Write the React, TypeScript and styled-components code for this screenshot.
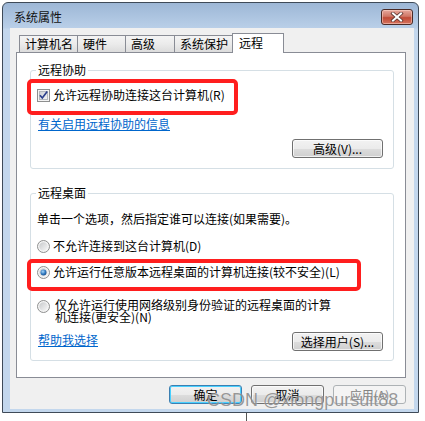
import React from 'react';
import styled, { createGlobalStyle, css } from 'styled-components';

const Global = createGlobalStyle`
  html, body { margin: 0; padding: 0; background: #ffffff; }
  body {
    width: 425px; height: 421px; overflow: hidden;
    font-family: "Noto Sans CJK SC", "Microsoft YaHei", sans-serif;
    font-size: 12px; color: #000;
  }
  * { box-sizing: border-box; }
`;

const Screen = styled.div`
  position: relative;
  width: 425px;
  height: 421px;
  padding: 2px 0 0 2px;
`;

const Window = styled.div`
  width: 417px;
  height: 411px;
  border: 1px solid #3e4a58;
  border-radius: 6px 6px 0 0;
  background: linear-gradient(to bottom, #9db7d6 0px, #b9cfe8 25px, #c3d7ed 26px, #c3d7ed 100%);
  display: flex;
  flex-direction: column;
  padding: 0 4px 3px 7px;
`;

const TitleBar = styled.div`
  height: 25px;
  flex: none;
  display: flex;
  justify-content: space-between;
  align-items: flex-start;
`;

const Title = styled.div`
  margin: 6px 0 0 4px;
  line-height: 16px;
  color: #111;
`;

const CloseButton = styled.div`
  margin: 6px 1px 0 0;
  width: 32px;
  height: 16px;
  border: 1px solid #4a2a26;
  border-radius: 3px;
  background: linear-gradient(to bottom, #e6a89d 0%, #d07766 45%, #c04a36 55%, #d5735f 100%);
  box-shadow: inset 0 0 0 1px rgba(255, 220, 210, 0.5);
  display: flex;
  align-items: center;
  justify-content: center;
`;

const Client = styled.div`
  flex: 1;
  background: #f0f0f0;
  display: flex;
  flex-direction: column;
  padding: 5px 8px 0 6px;
`;

const TabStrip = styled.div`
  display: flex;
  align-items: flex-end;
  height: 19px;
  margin-left: 3px;
  position: relative;
  z-index: 1;
`;

const Tab = styled.div<{ $w: number; $active?: boolean }>`
  width: ${(p) => p.$w}px;
  height: 17px;
  margin-left: -1px;
  &:first-child { margin-left: 0; }
  border: 1px solid #898c95;
  border-bottom: none;
  padding-left: 5px;
  line-height: 16px;
  background: linear-gradient(to bottom, #f4f4f4 0%, #ebebeb 50%, #dcdcdc 100%);
  color: #000;
  white-space: nowrap;
  ${(p) =>
    p.$active &&
    css`
      height: 20px;
      margin-bottom: -1px;
      padding-left: 6px;
      padding-top: 1px;
      background: #ffffff;
    `}
`;

const Panel = styled.div`
  height: 326px;
  flex: none;
  border: 1px solid #898c95;
  background: #ffffff;
  display: flex;
  flex-direction: column;
`;

const Group = styled.div<{ $h: number; $top: number }>`
  position: relative;
  height: ${(p) => p.$h}px;
  margin: ${(p) => p.$top}px 11px 0 13px;
  border: 1px solid #d5dfe5;
  border-radius: 3px;
  display: flex;
  flex-direction: column;
  padding: 0 10px 0 6px;
`;

const Legend = styled.span`
  position: absolute;
  top: -9px;
  left: 5px;
  padding: 0 2px;
  line-height: 16px;
  background: #ffffff;
  color: #000;
`;

const Line = styled.div<{ $mt: number }>`
  margin-top: ${(p) => p.$mt}px;
  line-height: 16px;
  white-space: nowrap;
`;

const OptionRow = styled.label<{ $mt: number }>`
  margin-top: ${(p) => p.$mt}px;
  display: flex;
  align-items: flex-start;
  gap: 3px;
  line-height: 16px;
`;

const Mark = styled.span`
  flex: none;
  width: 13px;
  height: 13px;
  margin-top: 2px;
  display: block;
`;

const OptionText = styled.span<{ $wrap?: boolean }>`
  white-space: ${(p) => (p.$wrap ? 'normal' : 'nowrap')};
  ${(p) =>
    p.$wrap &&
    css`
      width: 278px;
      line-height: 12px;
      padding-left: 2px;
      margin-top: 1px;
      word-break: break-all;
    `}
`;

const Link = styled.a<{ $mt: number }>`
  margin-top: ${(p) => p.$mt}px;
  color: #0066cc;
  text-decoration: underline;
  line-height: 16px;
  align-self: flex-start;
  padding-left: 1px;
`;

const ActionRow = styled.div<{ $mt: number }>`
  margin-top: ${(p) => p.$mt}px;
  display: flex;
  align-items: center;
  justify-content: space-between;
`;

const Button = styled.button<{ $w: number; $primary?: boolean }>`
  width: ${(p) => p.$w}px;
  height: 19px;
  padding: 0;
  font: inherit;
  font-size: 12px;
  line-height: 15px;
  color: #000;
  border: 1px solid #707070;
  border-radius: 3px;
  background: linear-gradient(to bottom, #f2f2f2 0%, #ebebeb 50%, #dddddd 51%, #cfcfcf 100%);
  box-shadow: inset 0 0 0 1px rgba(255, 255, 255, 0.7);
  text-align: center;
  ${(p) =>
    p.$primary &&
    css`
      border-color: #3c7fb1;
      box-shadow: inset 0 0 0 1px #48d0ff;
    `}
  &:disabled {
    color: #838383;
    border-color: #adb2b5;
    background: #f4f4f4;
    box-shadow: none;
  }
`;

const RightButton = styled(Button)`
  align-self: flex-end;
  margin-top: 7px;
`;

const Footer = styled.div`
  margin-top: 7px;
  display: flex;
  justify-content: flex-end;
  gap: 9px;
`;

const Highlight = styled.div<{ $x: number; $y: number; $w: number; $h: number }>`
  position: absolute;
  left: ${(p) => p.$x}px;
  top: ${(p) => p.$y}px;
  width: ${(p) => p.$w}px;
  height: ${(p) => p.$h}px;
  border: 4px solid #ff1e1e;
  border-radius: 5px;
  pointer-events: none;
`;

const Watermark = styled.div`
  position: absolute;
  left: 207px;
  top: 389px;
  font-family: "Liberation Sans", Arial, sans-serif;
  font-size: 18px;
  line-height: 22px;
  color: rgba(120, 120, 120, 0.75);
  text-shadow: 0 0 1px rgba(255, 255, 255, 0.6);
  white-space: nowrap;
  pointer-events: none;
`;

const DesktopLine = styled.div`
  position: absolute;
  left: 246px;
  top: 413px;
  width: 1px;
  height: 8px;
  background: #555;
`;

const CheckIcon = () => (
  <svg width="13" height="13" viewBox="0 0 13 13">
    <defs>
      <linearGradient id="cbg" x1="0" y1="0" x2="1" y2="1">
        <stop offset="0" stopColor="#cbcfd5" />
        <stop offset="1" stopColor="#f6f6f6" />
      </linearGradient>
    </defs>
    <rect x="0.5" y="0.5" width="12" height="12" fill="#f4f4f4" stroke="#8e8f8f" />
    <rect x="2.5" y="2.5" width="8" height="8" fill="url(#cbg)" stroke="#b4b8be" />
    <path d="M3 6.3 L5.3 9 L10.2 2.6" stroke="#2b3f8c" strokeWidth="1.7" fill="none" />
  </svg>
);

const RadioIcon = ({ on }: { on?: boolean }) => (
  <svg width="13" height="13" viewBox="0 0 13 13">
    <defs>
      <linearGradient id="rbg" x1="0" y1="0" x2="1" y2="1">
        <stop offset="0" stopColor="#c8cacc" />
        <stop offset="1" stopColor="#f7f7f7" />
      </linearGradient>
      <radialGradient id="rdot" cx="0.4" cy="0.35" r="0.7">
        <stop offset="0" stopColor="#a8d6f8" />
        <stop offset="0.6" stopColor="#2f78bf" />
        <stop offset="1" stopColor="#1b4d86" />
      </radialGradient>
    </defs>
    <circle cx="6.5" cy="6.5" r="6" fill="#f4f4f4" stroke="#8e8f8f" />
    <circle cx="6.5" cy="6.5" r="4.2" fill="url(#rbg)" />
    {on && <circle cx="6.5" cy="6.5" r="3" fill="url(#rdot)" />}
  </svg>
);

const CloseX = () => (
  <svg width="14" height="10" viewBox="0 0 14 10">
    <path d="M3 1.5 L11 8.5 M11 1.5 L3 8.5" stroke="#5a3530" strokeWidth="3.6" strokeLinecap="square" />
    <path d="M3 1.5 L11 8.5 M11 1.5 L3 8.5" stroke="#ffffff" strokeWidth="2" strokeLinecap="square" />
  </svg>
);

const tabs = [
  { label: '计算机名', w: 59 },
  { label: '硬件', w: 49 },
  { label: '高级', w: 50 },
  { label: '系统保护', w: 59 },
  { label: '远程', w: 52, active: true },
];

export default function App() {
  return (
    <>
      <Global />
      <Screen>
        <Window>
          <TitleBar>
            <Title>系统属性</Title>
            <CloseButton>
              <CloseX />
            </CloseButton>
          </TitleBar>
          <Client>
            <TabStrip>
              {tabs.map((t) => (
                <Tab key={t.label} $w={t.w} $active={t.active}>
                  {t.label}
                </Tab>
              ))}
            </TabStrip>
            <Panel>
              <Group $h={99} $top={17}>
                <Legend>远程协助</Legend>
                <OptionRow $mt={16}>
                  <Mark><CheckIcon /></Mark>
                  <OptionText>允许远程协助连接这台计算机(R)</OptionText>
                </OptionRow>
                <Link $mt={13}>有关启用远程协助的信息</Link>
                <RightButton $w={91}>高级(V)...</RightButton>
              </Group>
              <Group $h={168} $top={24}>
                <Legend>远程桌面</Legend>
                <Line $mt={17}>单击一个选项，然后指定谁可以连接(如果需要)。</Line>
                <OptionRow $mt={11}>
                  <Mark><RadioIcon /></Mark>
                  <OptionText>不允许连接到这台计算机(D)</OptionText>
                </OptionRow>
                <OptionRow $mt={10}>
                  <Mark><RadioIcon on /></Mark>
                  <OptionText>允许运行任意版本远程桌面的计算机连接(较不安全)(L)</OptionText>
                </OptionRow>
                <OptionRow $mt={18}>
                  <Mark><RadioIcon /></Mark>
                  <OptionText $wrap>仅允许运行使用网络级别身份验证的远程桌面的计算机连接(更安全)(N)</OptionText>
                </OptionRow>
                <ActionRow $mt={9}>
                  <Link $mt={0}>帮助我选择</Link>
                  <Button $w={91}>选择用户(S)...</Button>
                </ActionRow>
              </Group>
            </Panel>
            <Footer>
              <Button $w={73} $primary>确定</Button>
              <Button $w={73}>取消</Button>
              <Button $w={73} disabled>应用(A)</Button>
            </Footer>
          </Client>
        </Window>
        <Highlight $x={27} $y={79} $w={211} $h={36} />
        <Highlight $x={27} $y={259} $w={334} $h={32} />
        <Watermark>CSDN @xiongpursuit88</Watermark>
        <DesktopLine />
      </Screen>
    </>
  );
}
